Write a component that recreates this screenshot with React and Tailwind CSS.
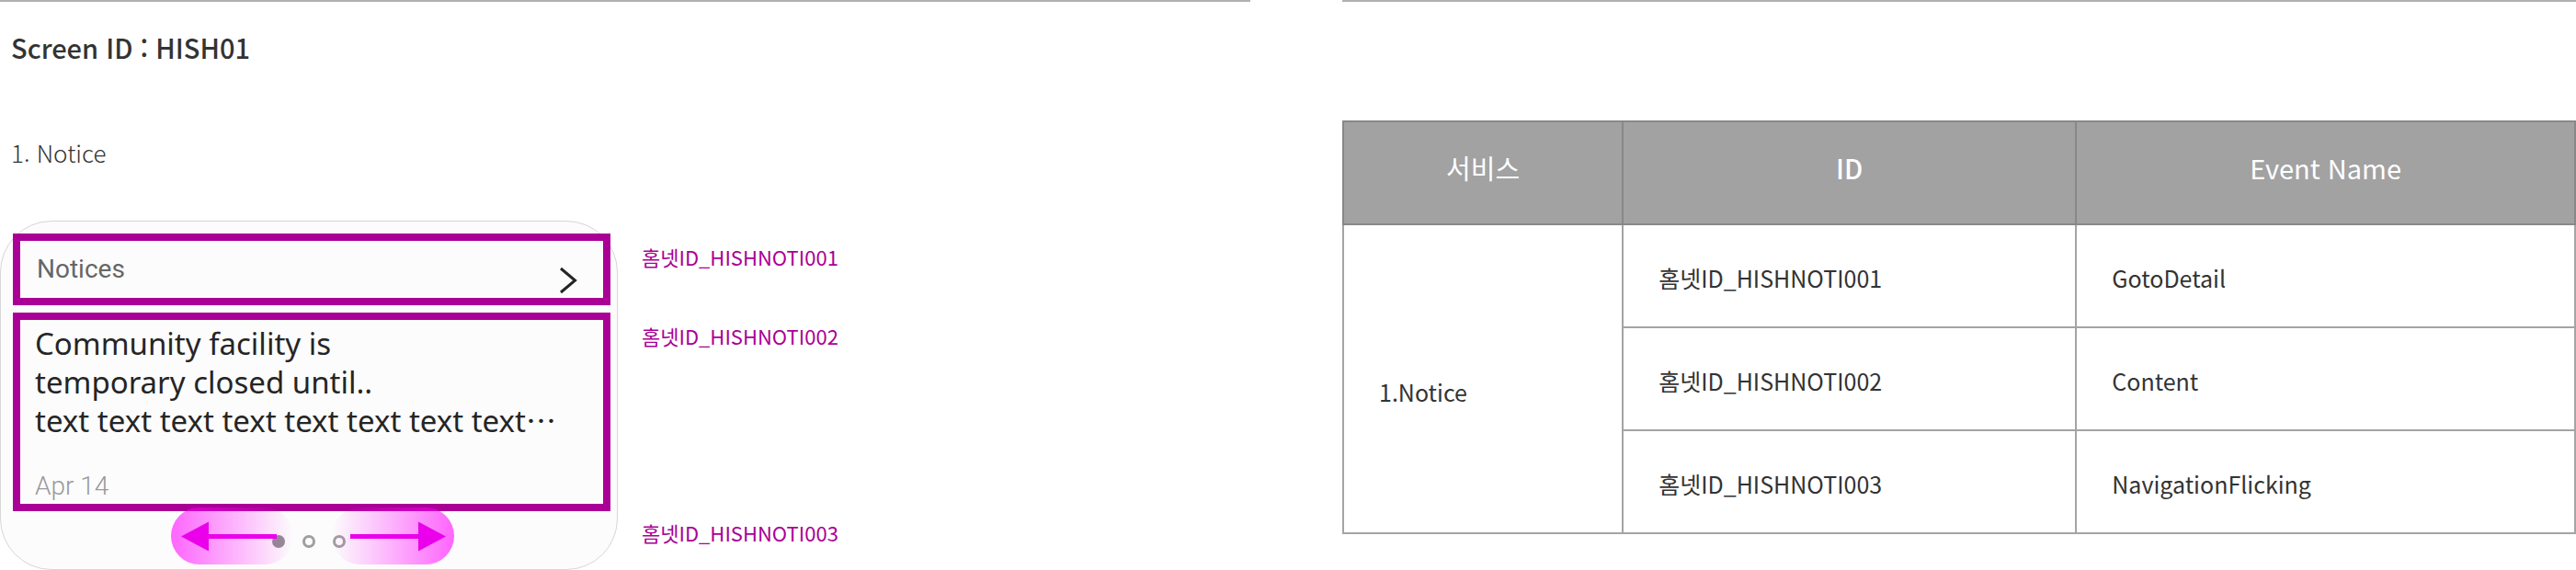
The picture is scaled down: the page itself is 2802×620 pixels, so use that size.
const events = [
  { id: "홈넷ID_HISHNOTI001", name: "GotoDetail" },
  { id: "홈넷ID_HISHNOTI002", name: "Content" },
  { id: "홈넷ID_HISHNOTI003", name: "NavigationFlicking" },
];

function SwipeArrow({ flipped }) {
  return (
    <svg viewBox="0 0 133 62" className="h-full w-full" aria-hidden="true">
      <g transform={flipped ? "translate(135 0) scale(-1 1)" : undefined} fill="#ea00ea">
        <path d="M11 31.5 41 15.5V47.5Z" />
        <path d="M40 29h75v5H40z" />
      </g>
    </svg>
  );
}

function SwipeHint() {
  return (
    <div className="pointer-events-none absolute inset-x-0 -top-1 flex justify-center gap-[42px] pl-2">
      <div className="h-[62px] w-[133px] rounded-full bg-linear-to-r from-[#ff00ff]/60 to-[#ff00ff]/0">
        <SwipeArrow />
      </div>
      <div className="h-[62px] w-[133px] rounded-full bg-linear-to-l from-[#ff00ff]/60 to-[#ff00ff]/0">
        <SwipeArrow flipped />
      </div>
    </div>
  );
}

function NoticeCard() {
  return (
    <div className="w-[672px] shrink-0 rounded-[56px] border border-[#d6d6d6] bg-[#fcfcfc] pt-[13px]">
      <div className="mr-[7px] ml-[13px] flex h-[78px] items-center justify-between border-8 border-[#aa0096] pr-[28px] pl-[18px]">
        <h3 className="font-[Roboto,sans-serif] text-[28px] leading-8 text-[#666]">Notices</h3>
        <button type="button" aria-label="Open notices" className="self-end pb-1">
          <svg viewBox="0 0 20 30" className="h-[30px] w-5" fill="none" stroke="#252525" strokeWidth="3" aria-hidden="true">
            <path d="M2 2 17.500 15 2 28" />
          </svg>
        </button>
      </div>
      <div className="mt-2 mr-[7px] ml-[13px] h-[216px] border-8 border-[#aa0096] pt-[5px] pl-4">
        <p className="font-['Noto_Sans','Noto_Sans_CJK_KR',sans-serif] text-[33px] leading-[42px] whitespace-nowrap text-[#252525]">
          Community facility is
          <br />
          temporary closed until..
          <br />
          text text text text text text text text
          <span lang="ko" className="font-['Noto_Sans_CJK_KR',sans-serif] leading-none">⋯</span>
        </p>
        <p className="mt-[34px] font-[Roboto,sans-serif] text-[28px] leading-8 font-light text-[#999]">Apr 14</p>
      </div>
      <div className="relative flex h-[63px] justify-center gap-[19px] pt-[26px]">
        <button type="button" aria-label="Notice 1" className="size-3.5 rounded-full bg-[#8f8f8f]" />
        <button type="button" aria-label="Notice 2" className="size-3.5 rounded-full border-3 border-[#9f9f9f]" />
        <button type="button" aria-label="Notice 3" className="size-3.5 rounded-full border-3 border-[#9f9f9f]" />
        <SwipeHint />
      </div>
    </div>
  );
}

function EventTable() {
  return (
    <table className="w-full table-fixed border-collapse text-left text-[25px] leading-8 text-[#333]">
      <colgroup>
        <col className="w-[22.7%]" />
        <col className="w-[36.8%]" />
        <col />
      </colgroup>
      <thead>
        <tr className="h-28 bg-[#a2a2a2] text-center text-[29px] text-white">
          <th className="border-2 border-[#888] pb-3 font-normal">서비스</th>
          <th className="border-2 border-[#888] pb-3 font-medium">ID</th>
          <th className="border-2 border-[#888] pb-3 font-normal">Event Name</th>
        </tr>
      </thead>
      <tbody>
        {events.map((event, i) => (
          <tr key={event.id} className="h-28">
            {i === 0 && (
              <td rowSpan={events.length} className="border-2 border-[#a4a4a4] pt-7 pl-[38px]">
                1.Notice
              </td>
            )}
            <td className="border-2 border-[#a4a4a4] pt-1 pl-[38px]">{event.id}</td>
            <td className="border-2 border-[#a4a4a4] pt-1 pl-[38px]">{event.name}</td>
          </tr>
        ))}
      </tbody>
    </table>
  );
}

export default function App() {
  return (
    <main
      lang="ko"
      className="grid grid-cols-[1360fr_1342fr] gap-[100px] bg-white font-['Noto_Sans_CJK_KR',sans-serif] text-[#333]"
    >
      <section className="border-t-2 border-[#b0b0b0]">
        <h1 className="pt-[26px] pl-3 text-[29px] leading-[46px] font-medium">Screen ID : HISH01</h1>
        <h2 className="mt-[72px] pl-3 text-[26px] leading-10 font-light">1. Notice</h2>
        <div className="mt-[54px] flex gap-[26px]">
          <NoticeCard />
          <ul className="grid grid-rows-[86px_214px_auto] pt-3.5 text-[22px] leading-8 text-[#aa0096]">
            {events.map((event) => (
              <li key={event.id} className="pt-[9px]">
                {event.id}
              </li>
            ))}
          </ul>
        </div>
      </section>
      <section className="border-t-2 border-[#b0b0b0] pt-[129px]">
        <EventTable />
      </section>
    </main>
  );
}
